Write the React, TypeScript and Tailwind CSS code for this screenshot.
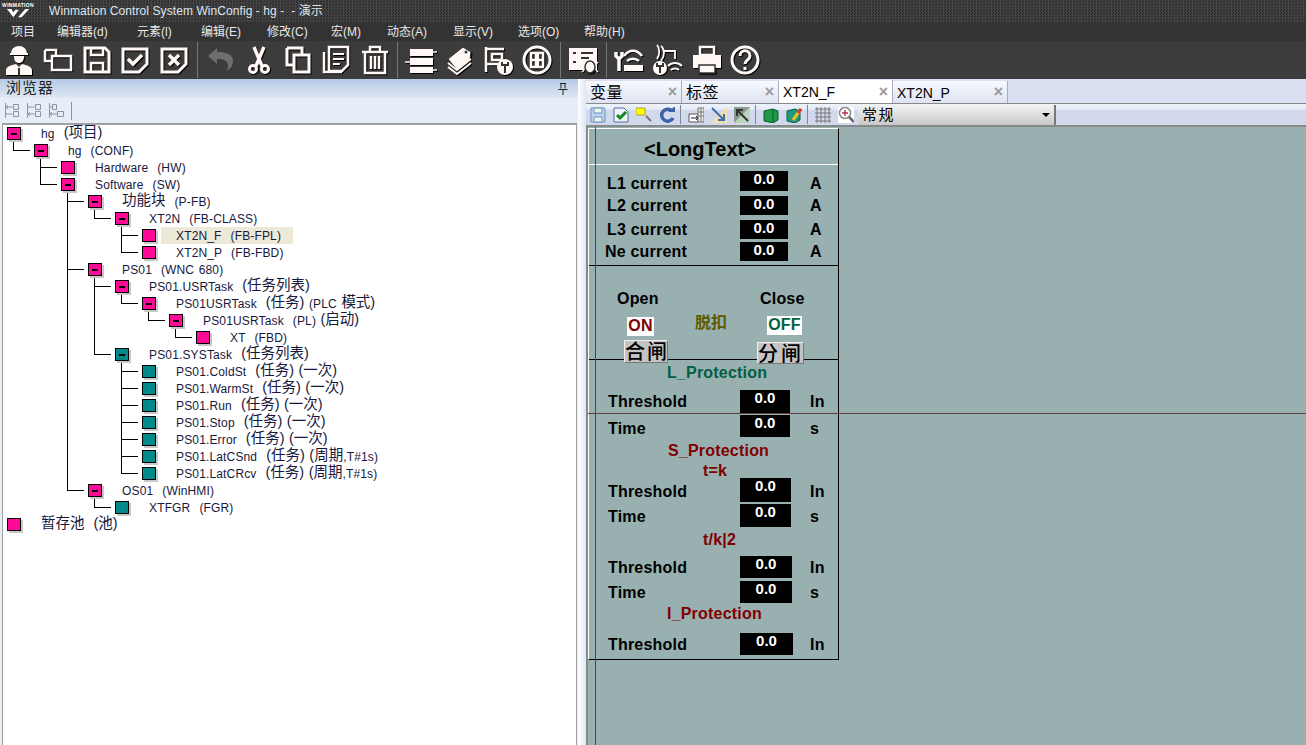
import type { ReactNode } from "react"

const ui = "font-['Liberation_Sans','Noto_Sans_CJK_SC',sans-serif]"
const cjk = "font-['Noto_Sans_CJK_SC',sans-serif]"

type Node = { label: string; color?: "pink" | "teal"; open?: boolean; selected?: boolean; kids?: Node[] }

const tree: Node[] = [
  {
    label: "hg  (项目)",
    open: true,
    kids: [
      {
        label: "hg  (CONF)",
        open: true,
        kids: [
          { label: "Hardware  (HW)" },
          {
            label: "Software  (SW)",
            open: true,
            kids: [
              {
                label: "功能块  (P-FB)",
                open: true,
                kids: [
                  {
                    label: "XT2N  (FB-CLASS)",
                    open: true,
                    kids: [{ label: "XT2N_F  (FB-FPL)", selected: true }, { label: "XT2N_P  (FB-FBD)" }],
                  },
                ],
              },
              {
                label: "PS01  (WNC 680)",
                open: true,
                kids: [
                  {
                    label: "PS01.USRTask  (任务列表)",
                    open: true,
                    kids: [
                      {
                        label: "PS01USRTask  (任务) (PLC 模式)",
                        open: true,
                        kids: [
                          {
                            label: "PS01USRTask  (PL) (启动)",
                            open: true,
                            kids: [{ label: "XT  (FBD)" }],
                          },
                        ],
                      },
                    ],
                  },
                  {
                    label: "PS01.SYSTask  (任务列表)",
                    open: true,
                    color: "teal",
                    kids: [
                      { label: "PS01.ColdSt  (任务) (一次)", color: "teal" },
                      { label: "PS01.WarmSt  (任务) (一次)", color: "teal" },
                      { label: "PS01.Run  (任务) (一次)", color: "teal" },
                      { label: "PS01.Stop  (任务) (一次)", color: "teal" },
                      { label: "PS01.Error  (任务) (一次)", color: "teal" },
                      { label: "PS01.LatCSnd  (任务) (周期,T#1s)", color: "teal" },
                      { label: "PS01.LatCRcv  (任务) (周期,T#1s)", color: "teal" },
                    ],
                  },
                ],
              },
              {
                label: "OS01  (WinHMI)",
                open: true,
                kids: [{ label: "XTFGR  (FGR)", color: "teal" }],
              },
            ],
          },
        ],
      },
    ],
  },
  { label: "暂存池  (池)" },
]

type Row = { node: Node; depth: number; last: boolean; pass: number[] }

function flatten(nodes: Node[], depth: number, pass: number[]): Row[] {
  return nodes.flatMap((node, i) => {
    const last = i === nodes.length - 1
    const kidPass = depth > 0 && !last ? [...pass, depth] : pass
    return [{ node, depth, last, pass }, ...flatten(node.kids ?? [], depth + 1, kidPass)]
  })
}

// chinese runs and their brackets are drawn larger than the latin part
function Label({ text }: { text: string }) {
  const parts = text.split(/(\(?[\u4e00-\u9fff]+\)?)/)
  return (
    <>
      {parts.map((p, i) =>
        i % 2 ? (
          <span key={i} className="relative -top-[1px] text-[14.5px] tracking-normal [word-spacing:0] leading-[17px]">
            {p}
          </span>
        ) : (
          <span key={i}>{p}</span>
        ),
      )}
    </>
  )
}

function TreeRow({ row }: { row: Row }) {
  const { node, depth, last, pass } = row
  return (
    <div className="relative h-[17px] shrink-0 flex items-center" style={{ paddingLeft: 4 + depth * 27 }}>
      {pass.map((d) => (
        <span key={d} className="absolute top-0 bottom-0 w-px bg-black" style={{ left: 10 + (d - 1) * 27 }} />
      ))}
      {depth > 0 && (
        <>
          <span
            className={`absolute top-0 w-px bg-black ${last ? "h-[9px]" : "h-[17px]"}`}
            style={{ left: 10 + (depth - 1) * 27 }}
          />
          <span className="absolute top-[8px] h-px w-[17px] bg-black" style={{ left: 10 + (depth - 1) * 27 }} />
        </>
      )}
      <span
        className={`relative w-[14px] h-[13px] border border-black shadow-[2px_2px_0_#c8c8c8] flex items-center justify-center shrink-0 ${
          node.color === "teal" ? "bg-[#008a8a]" : "bg-[#ff0a96]"
        }`}
      >
        {node.open && <span className="w-[6px] h-[2px] bg-black" />}
      </span>
      <span
        className={`ml-[5px] pl-[15px] pr-[12px] h-[17px] leading-[18px] text-[12px] tracking-[0.15px] [word-spacing:1px] whitespace-pre text-[#18183c] ${
          node.selected ? "bg-[#ece9d8]" : ""
        }`}
      >
        <Label text={node.label} />
      </span>
    </div>
  )
}

function Tool({ children, dim }: { children: ReactNode; dim?: boolean }) {
  return (
    <svg
      viewBox="0 0 32 32"
      className={`w-[32px] h-[32px] shrink-0 mx-[3.35px] ${dim ? "text-[#6e6e6e]" : "text-[#fff8f4] drop-shadow-[1px_1px_0_#000]"}`}
      fill="none"
      stroke="currentColor"
      strokeWidth="3"
    >
      {children}
    </svg>
  )
}

const Sep = () => <span className="w-px h-[36px] bg-[#777] mx-[3.2px] shrink-0" />

function MainToolbar() {
  return (
    <div className="h-[38px] bg-[#3c3c3c] flex items-center shrink-0">
      <Tool>
        <path d="M8 9a8 7 0 0 1 16 0h1v2H7V9z" fill="currentColor" stroke="none" />
        <path d="M11 12h10c0 5-2 7-5 7s-5-2-5-7z" fill="currentColor" stroke="none" />
        <path d="M3 31v-5c0-3 5-5 10-6l3 3 3-3c5 1 10 3 10 6v5z" fill="currentColor" stroke="none" />
        <path d="M16 24v7" stroke="#333" strokeWidth="2" />
      </Tool>
      <Tool>
        <path d="M3 6h11v5M10 12h19v14H10zM3 6v11h7" strokeWidth="2.5" />
      </Tool>
      <Tool>
        <path d="M4 4h20l4 4v20H4z" />
        <path d="M10 4v7h12V4M10 28v-9h12v9" strokeWidth="2.5" />
      </Tool>
      <Tool>
        <path d="M4 5h24v15l-8 8H4z" />
        <path d="M9 15l5 5 9-9" strokeWidth="3.5" />
      </Tool>
      <Tool>
        <path d="M4 5h24v15l-8 8H4z" />
        <path d="M11 11l10 10M21 11L11 21" strokeWidth="3.5" />
      </Tool>
      <Sep />
      <Tool dim>
        <path d="M13 4L4 12l9 8v-5c6 0 11 1 11 7 0 3-2 5-2 5 5-2 7-6 7-10 0-7-7-9-16-9z" fill="currentColor" stroke="none" />
      </Tool>
      <Tool>
        <path d="M11 3l8 19M21 3l-8 19" strokeWidth="3.5" />
        <circle cx="10" cy="25" r="3.5" />
        <circle cx="22" cy="25" r="3.5" />
      </Tool>
      <Tool>
        <path d="M5 4h15v7M12 11h15v17H12zM5 4v17h7" strokeWidth="3" />
      </Tool>
      <Tool>
        <path d="M4 8v20h18M9 3h19v18l-6 6H9z" strokeWidth="2.5" />
        <path d="M13 10h11M13 15h11M13 20h7" strokeWidth="2" />
      </Tool>
      <Tool>
        <path d="M3 8h26M11 8V3h10v5M6 8v21h20V8M12 12v13M16 12v13M20 12v13" strokeWidth="2.5" />
      </Tool>
      <Sep />
      <Tool>
        <path d="M5 5h23v7H5zM5 14h23v7H5zM5 23h23v6H5z" fill="currentColor" stroke="none" />
        <path d="M0 18h5M28 8h4M28 26h4" strokeWidth="1.5" />
      </Tool>
      <Tool>
        <path d="M4 15L19 3l8 5-1 8-13 10z" fill="currentColor" stroke="#333" strokeWidth="1" />
        <circle cx="22" cy="8" r="1.5" fill="#333" stroke="none" />
        <path d="M4 19l9 7 14-11M4 23l9 7 14-11" strokeWidth="2" />
      </Tool>
      <Tool>
        <path d="M4 3v25M4 5h18M4 20h12M10 10h10v6H10z" strokeWidth="2.5" />
        <circle cx="23" cy="23" r="8" fill="currentColor" stroke="none" />
        <path d="M23 21v8M20 18v3h6v-3" stroke="#333" strokeWidth="2" />
      </Tool>
      <Tool>
        <circle cx="16" cy="16" r="13" />
        <path d="M15 9H10v14h5zM17 9h5v14h-5zM10 16h12" strokeWidth="2.5" />
      </Tool>
      <Sep />
      <Tool>
        <path d="M2 4h28v22H2z" fill="currentColor" stroke="none" />
        <path d="M14 9h12M6 9h3M6 18h3M14 14h8" stroke="#333" strokeWidth="2" />
        <ellipse cx="23" cy="23" rx="5" ry="6" fill="currentColor" stroke="#333" strokeWidth="1.5" />
        <path d="M17 20l-2-2M29 20l2-2M17 26l-2 2M29 26l2 2" strokeWidth="1.5" />
      </Tool>
      <Sep />
      <Tool>
        <path d="M3 8v4l3 3 3-3V8M6 15v12" strokeWidth="3.5" />
        <path d="M11 21h19v6H11z" fill="currentColor" stroke="none" />
        <path d="M11 12c5-7 13-7 18 0M14 17c3-3 9-3 12 0" strokeWidth="2.5" />
      </Tool>
      <Tool>
        <path d="M5 1c3 3 3 10 0 14M9 2c4 3 4 10 0 15M12 7h11v8" strokeWidth="1.8" />
        <circle cx="8" cy="24" r="7" fill="currentColor" stroke="none" />
        <path d="M8 22v7M5 19v3h6v-3" stroke="#333" strokeWidth="2" />
        <path d="M16 22c4-4 10-4 14 0M19 26c2-2 6-2 8 0" strokeWidth="2" />
      </Tool>
      <Tool>
        <path d="M9 3h14v8H9z" strokeWidth="2.5" />
        <path d="M2 11h28v13H2z" fill="currentColor" stroke="none" />
        <path d="M8 21h16v8H8z" fill="currentColor" stroke="#333" strokeWidth="1.5" />
      </Tool>
      <Tool>
        <circle cx="16" cy="16" r="13" />
        <path d="M11 12c0-7 10-7 10 0 0 4-5 4-5 8" strokeWidth="3" />
        <path d="M16 23v3" strokeWidth="3" />
      </Tool>
    </div>
  )
}

const menus = [
  { name: "编辑器(d)", w: "w-[80px]" },
  { name: "元素(l)", w: "w-[64px]" },
  { name: "编辑(E)", w: "w-[66px]" },
  { name: "修改(C)", w: "w-[64px]" },
  { name: "宏(M)", w: "w-[56px]" },
  { name: "动态(A)", w: "w-[66px]" },
  { name: "显示(V)", w: "w-[65px]" },
  { name: "选项(O)", w: "w-[66px]" },
  { name: "帮助(H)", w: "w-[60px]" },
]

function Mini({ children }: { children: ReactNode }) {
  return (
    <svg viewBox="1 1 16 16" className="w-[16px] h-[16px] shrink-0 mx-[3.5px]">
      {children}
    </svg>
  )
}

const MiniSep = () => <span className="w-px h-[19px] bg-[#7a8a9a] ml-[2px] mr-[3px] shrink-0" />

function DocTabs() {
  const tabs = [
    { name: "变量", w: "w-[96px]", big: true },
    { name: "标签", w: "w-[97px]", big: true },
    { name: "XT2N_F", w: "w-[114px]", active: true },
    { name: "XT2N_P", w: "w-[115px]", low: true },
  ]
  return (
    <div className="h-[25px] flex items-end bg-[#d9dff0] border-b border-[#888] shrink-0">
      {tabs.map((t) => (
        <div
          key={t.name}
          className={`${t.w} flex items-center justify-between pl-[4px] pr-[3px] border-r border-[#aab] ${
            t.active ? "h-[23px] bg-white" : "h-[22px] bg-gradient-to-b from-[#f8f9fd] to-[#dde3f2]"
          }`}
        >
          <span className={`text-black ${t.big ? "text-[16px] tracking-[0.5px]" : "text-[14px]"} ${t.low ? "pt-[3px]" : "pt-[1px]"}`}>
            {t.name}
          </span>
          <span className="text-[16px] leading-none font-bold text-[#9a9a9a] pr-[1px]">×</span>
        </div>
      ))}
    </div>
  )
}

function EditorToolbar() {
  return (
    <div className="h-[21px] flex items-center bg-[linear-gradient(#eef2fa_0,#e6ebf7_25%,#d3d9ec_30%,#d3d9ec_100%)] shrink-0">
      <div className="flex items-center">
        <Mini>
          <path d="M2 2h13l1 1v13H2z" fill="#bcd3f0" stroke="#6f94c4" />
          <path d="M5 2h8v5H5zM5 11h8v5H5z" fill="#eef5e6" stroke="#6f94c4" />
        </Mini>
        <Mini>
          <path d="M2 2h10l4 4v10H2z" fill="#eef3fa" stroke="#50709c" />
          <path d="M5 9l3 3 6-6" stroke="#108a20" strokeWidth="3" fill="none" />
        </Mini>
        <Mini>
          <path d="M1 2h9v7H1z" fill="#ffff00" stroke="#b0a030" />
          <path d="M11 10l5 5" stroke="#777" strokeWidth="2" />
        </Mini>
        <Mini>
          <path d="M14 5a6 6 0 1 0 1 7" stroke="#3c62a8" strokeWidth="3.5" fill="none" />
          <path d="M10 6h7V0z" fill="#3c62a8" />
        </Mini>
        <MiniSep />
        <Mini>
          <path d="M2 8h9v8H2z" fill="#fff" stroke="#555" />
          <path d="M11 2h6v14h-6zM11 6h6M11 10h6M14 2v14" fill="#e8e8e8" stroke="#777" />
          <path d="M4 12h7M9 10l2 2-2 2" stroke="#223" fill="none" />
        </Mini>
        <Mini>
          <path d="M1 17L17 1v16z" fill="#f5dfa8" />
          <path d="M2 2l12 12M14 8v6H8" stroke="#3a6fae" strokeWidth="2" fill="none" />
        </Mini>
        <Mini>
          <path d="M1 1h16v16H1z" fill="#8b9a8e" />
          <path d="M1 17L17 17 17 1z" fill="#bcd6bc" />
          <path d="M15 15L4 4M4 10V4h6" stroke="#333" strokeWidth="2" fill="none" />
        </Mini>
        <MiniSep />
        <Mini>
          <path d="M2 5l9-2 5 2v9l-5 3-9-2z" fill="#1f9a4c" stroke="#0d5a2c" />
          <path d="M11 3v14" stroke="#0d5a2c" />
        </Mini>
        <Mini>
          <path d="M2 5l8-2 5 2v9l-5 3-8-2z" fill="#1f9a7c" stroke="#0d5a4c" />
          <path d="M8 14L16 3" stroke="#f2c021" strokeWidth="3" />
          <path d="M13 7l3-4" stroke="#d93a2b" strokeWidth="3" />
        </Mini>
        <MiniSep />
        <Mini>
          <path d="M3 1v16M7 1v16M11 1v16M15 1v16M1 3h16M1 7h16M1 11h16M1 15h16" stroke="#777" fill="none" />
        </Mini>
        <Mini>
          <rect width="18" height="18" fill="#fff" />
          <circle cx="8" cy="7" r="5.5" fill="#fff" stroke="#888" strokeWidth="1.5" />
          <path d="M5 7h6M8 4v6" stroke="#c03050" strokeWidth="1.5" />
          <path d="M12 11l5 5" stroke="#667" strokeWidth="2.5" />
        </Mini>
      </div>
      <div className="ml-[1px] w-[198px] h-[20px] bg-gradient-to-b from-[#f2f2f2] to-[#c8c8c8] border-r-2 border-[#777] flex items-center justify-between pl-[4px] pr-[4px]">
        <span className={`text-[15px] tracking-[1.5px] text-black ${cjk}`}>常规</span>
        <span className="w-0 h-0 border-x-[4px] border-x-transparent border-t-[4px] border-t-black" />
      </div>
    </div>
  )
}

const Bold = ({ className, children }: { className: string; children: ReactNode }) => (
  <span className={`absolute mt-[1px] font-bold text-[16px] tracking-[0.2px] leading-[18px] whitespace-pre text-black ${className}`}>
    {children}
  </span>
)

const Val = ({ className }: { className: string }) => (
  <span className={`absolute bg-black text-white font-bold text-[15px] leading-[16px] text-center ${className}`}>0.0</span>
)

function Faceplate() {
  return (
    <div className="absolute left-0 top-[1px] w-[251px] h-[532px] border border-t-white border-l-white border-r-black border-b-black">
      <span className="absolute left-0 right-0 top-[35px] h-px bg-white" />
      <span className="absolute left-0 right-0 top-[136px] h-px bg-black" />
      <span className="absolute left-0 right-0 top-[230px] h-px bg-black" />

      <Bold className="left-[55px] top-[7px] !text-[20px] !leading-[24px] !tracking-normal">{"<LongText>"}</Bold>

      <Bold className="left-[18px] top-[45px]">L1 current</Bold>
      <Val className="left-[151px] top-[42px] w-[48px] h-[20px]" />
      <Bold className="left-[221px] top-[45px]">A</Bold>
      <Bold className="left-[18px] top-[67px]">L2 current</Bold>
      <Val className="left-[151px] top-[67px] w-[48px] h-[19px]" />
      <Bold className="left-[221px] top-[67px]">A</Bold>
      <Bold className="left-[18px] top-[91px]">L3 current</Bold>
      <Val className="left-[151px] top-[91px] w-[48px] h-[19px]" />
      <Bold className="left-[221px] top-[91px]">A</Bold>
      <Bold className="left-[16px] top-[113px]">Ne current</Bold>
      <Val className="left-[151px] top-[113px] w-[48px] h-[19px]" />
      <Bold className="left-[221px] top-[113px]">A</Bold>

      <Bold className="left-[28px] top-[160px]">Open</Bold>
      <Bold className="left-[171px] top-[160px]">Close</Bold>
      <span className={`absolute left-[106px] top-[182px] text-[16px] leading-[20px] font-semibold text-[#5c5c00] ${cjk}`}>
        脱扣
      </span>
      <Bold className="left-[38px] top-[187px] w-[27px] h-[19px] bg-white text-center !text-[#800000]">ON</Bold>
      <Bold className="left-[178px] top-[186px] w-[35px] h-[19px] bg-white text-center !text-[#006040]">OFF</Bold>
      <span
        className={`absolute left-[35px] top-[211px] w-[44px] h-[23px] bg-[#c4c4c4] border border-t-[#eee] border-l-[#eee] border-r-[#777] border-b-[#777] text-[20px] leading-[20px] font-medium whitespace-nowrap tracking-[2px] text-black ${cjk}`}
      >
        合闸
      </span>
      <span
        className={`absolute left-[168px] top-[213px] w-[47px] h-[22px] bg-[#c4c4c4] border border-t-[#eee] border-l-[#eee] border-r-[#777] border-b-[#777] text-[20px] leading-[20px] font-medium whitespace-nowrap tracking-[3px] text-black ${cjk}`}
      >
        分闸
      </span>

      <Bold className="left-[78px] top-[234px] !text-[#006040]">L_Protection</Bold>
      <Bold className="left-[19px] top-[263px]">Threshold</Bold>
      <Val className="left-[151px] top-[261px] w-[50px] h-[23px]" />
      <Bold className="left-[221px] top-[263px]">In</Bold>
      <Bold className="left-[19px] top-[290px]">Time</Bold>
      <Val className="left-[151px] top-[286px] w-[50px] h-[22px]" />
      <Bold className="left-[221px] top-[290px]">s</Bold>

      <Bold className="left-[79px] top-[312px] !text-[#800000]">S_Protection</Bold>
      <Bold className="left-[114px] top-[332px] !text-[#800000]">t=k</Bold>
      <Bold className="left-[19px] top-[353px]">Threshold</Bold>
      <Val className="left-[151px] top-[349px] w-[51px] h-[24px]" />
      <Bold className="left-[221px] top-[353px]">In</Bold>
      <Bold className="left-[19px] top-[378px]">Time</Bold>
      <Val className="left-[151px] top-[375px] w-[51px] h-[23px]" />
      <Bold className="left-[221px] top-[378px]">s</Bold>

      <Bold className="left-[114px] top-[401px] !text-[#800000]">t/k|2</Bold>
      <Bold className="left-[19px] top-[429px]">Threshold</Bold>
      <Val className="left-[151px] top-[427px] w-[52px] h-[22px]" />
      <Bold className="left-[221px] top-[429px]">In</Bold>
      <Bold className="left-[19px] top-[454px]">Time</Bold>
      <Val className="left-[151px] top-[452px] w-[52px] h-[22px]" />
      <Bold className="left-[221px] top-[454px]">s</Bold>

      <Bold className="left-[78px] top-[475px] !text-[#800000]">I_Protection</Bold>
      <Bold className="left-[19px] top-[506px]">Threshold</Bold>
      <Val className="left-[151px] top-[504px] w-[53px] h-[22px]" />
      <Bold className="left-[221px] top-[506px]">In</Bold>
    </div>
  )
}

export default function App() {
  const rows = flatten(tree, 0, [])
  return (
    <div className={`w-[1306px] h-[745px] overflow-hidden flex flex-col bg-[#f0f0f0] ${ui}`}>
      <div className="h-[22px] flex items-center shrink-0 bg-[repeating-conic-gradient(#454545_0_25%,#2f2f2f_0_50%)] bg-[length:3px_3px]">
        <div className="w-[36px] mr-[13px] h-[22px] flex flex-col items-center pt-[3px] shrink-0">
          <span className="text-[5px] leading-[5px] font-bold text-white tracking-[0.3px]">WINMATION</span>
          <svg viewBox="0 0 26 10" className="w-[24px] h-[11px]">
            <path d="M1 0l7 9 6-8h-4l-2 3-2-4zM13 9l8-9h4l-8 9z" fill="#fff" />
          </svg>
        </div>
        <span className="text-[12px] tracking-[0.08px] text-[#dce6f0] whitespace-pre">
          Winmation Control System WinConfig - hg -  - 演示
        </span>
      </div>
      <div className="h-[19px] bg-[#333333] flex items-center pl-[11px] text-[12px] text-[#e8e8e8] shrink-0">
        <span className="w-[46px]">项目</span>
        {menus.map((m) => (
          <span key={m.name} className={`${m.w} shrink-0`}>
            {m.name}
          </span>
        ))}
      </div>
      <MainToolbar />

      <div className="flex-1 flex min-h-0">
        <div className="w-[578px] flex flex-col shrink-0 bg-[#e8eef7]">
          <div className="h-[19px] bg-gradient-to-b from-[#b5c9e4] to-[#dfe8f4] flex items-center justify-between pl-[6px] pr-[9px] shrink-0 overflow-hidden">
            <span className="-mt-[3px] text-[15px] tracking-[1px] text-[#222] leading-none">浏览器</span>
            <svg viewBox="0 0 12 13" className="w-[12px] h-[13px]" fill="none" stroke="#222">
              <path d="M3 1.5h6M4 1.5v5M8 1.5v5M1.5 7.5h9M6 7.5V13" />
            </svg>
          </div>
          <div className="h-[25px] flex items-center pl-[5px] gap-[7px] shrink-0">
            <svg viewBox="0 0 15 15" className="w-[15px] h-[15px]" fill="none" stroke="#8a94a4">
              <path d="M.5 0v15M.5 4h7M3 2L1 4l2 2M8.5 1.5h5v5h-5zM8.5 8.5h5v5h-5zM.5 11h7" />
            </svg>
            <svg viewBox="0 0 15 15" className="w-[15px] h-[15px]" fill="none" stroke="#8a94a4">
              <path d="M.5 0v15M.5 4h7M.5 11h7M3 9l-2 2 2 2M8.5 1.5h5v5h-5zM8.5 8.5h5v5h-5z" />
            </svg>
            <svg viewBox="0 0 15 15" className="w-[15px] h-[15px]" fill="none" stroke="#8a94a4">
              <path d="M.5 0v15M.5 4h3M3.5 1.5h4v5h-4zM8.5 8.5h6v5h-6zM3 9l-2 2 2 2M1 11h7" />
            </svg>
            <span className="w-px h-[18px] bg-[#8a94a4]" />
          </div>
          <div className="flex-1 ml-[2px] mr-[1px] bg-white border-t-2 border-l border-r border-[#a0a0a0] flex flex-col overflow-hidden">
            {rows.map((r) => (
              <TreeRow key={r.node.label} row={r} />
            ))}
          </div>
        </div>
        <div className="w-[8px] shrink-0 bg-gradient-to-r from-white to-[#dde6f6]" />
        <div className="flex-1 flex flex-col min-w-0">
          <DocTabs />
          <EditorToolbar />
          <div className="relative flex-1 bg-[#98b0b0] border-t-2 border-l-2 border-[#888]">
            <Faceplate />
            <span className="absolute left-[7px] top-0 bottom-0 w-px bg-[#5a4040]" />
            <span className="absolute left-0 right-0 top-[286px] h-px bg-[#5a4040]" />
          </div>
        </div>
      </div>
    </div>
  )
}
